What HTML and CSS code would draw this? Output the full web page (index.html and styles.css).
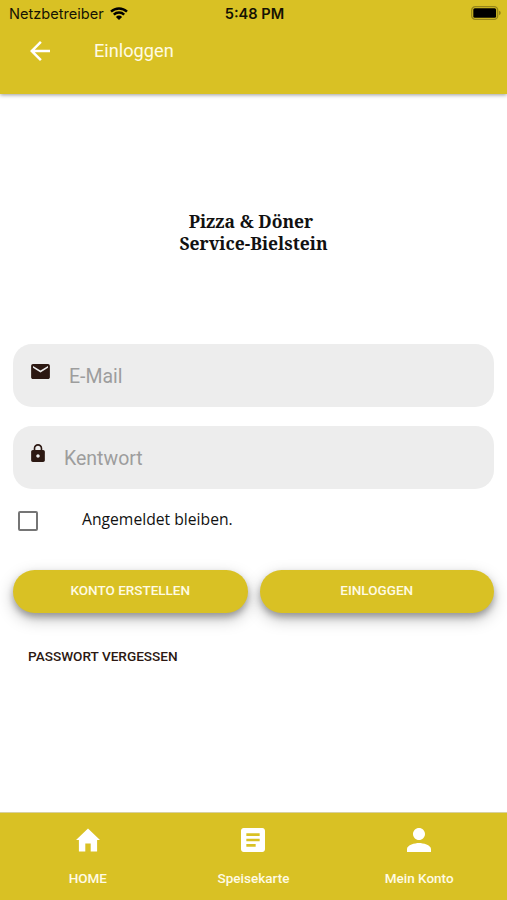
FILE: index.html
```html
<!DOCTYPE html>
<html lang="de">
<head>
<meta charset="UTF-8">
<title>Einloggen</title>
<link rel="stylesheet" href="styles.css">
</head>
<body>

<header class="header">
    <div class="status">
        <div class="carrier">
            <span class="carrier-name">Netzbetreiber</span>
            <svg class="wifi" viewBox="0 0 18 13">
                <path d="M1 4.7a11.5 11.5 0 0 1 16 0M3.8 7.6a7.4 7.4 0 0 1 10.4 0" fill="none" stroke="#000" stroke-width="2.4"/>
                <path d="M5.9 9.9a4.4 4.4 0 0 1 6.2 0L9 13z"/>
            </svg>
        </div>
        <span class="time">5:48 PM</span>
        <svg class="battery" viewBox="0 0 30 14">
            <rect x=".7" y=".7" width="26" height="12.6" rx="3.6" fill="none" stroke="#968619" stroke-width="1.3"/>
            <rect x="2.3" y="2.3" width="22.8" height="9.4" rx="1.5"/>
            <path d="M28 4.8v4.4q1.8-.6 1.8-2.2T28 4.8z" fill="#968619"/>
        </svg>
    </div>
    <div class="toolbar">
        <svg class="back" viewBox="4 4 16 16"><path d="M20 11H7.83l5.59-5.59L12 4l-8 8 8 8 1.41-1.41L7.83 13H20v-2z"/></svg>
        <h1 class="title">Einloggen</h1>
    </div>
</header>

<main class="content">
    <div class="logo">
        <div class="logo-first">Pizza &amp; Döner</div>
        <div class="logo-second">Service-Bielstein</div>
    </div>

    <form class="login">
        <label class="field">
            <svg class="icon-mail" viewBox="2 4 20 16"><path d="M20 4H4c-1.1 0-2 .9-2 2v12c0 1.1.9 2 2 2h16c1.1 0 2-.9 2-2V6c0-1.1-.9-2-2-2zm0 4l-8 5-8-5V6l8 5 8-5v2z"/></svg>
            <input class="input" type="email" placeholder="E-Mail">
        </label>
        <label class="field">
            <svg class="icon-lock" viewBox="4 1 16 21"><path d="M18 8h-1V6c0-2.76-2.24-5-5-5S7 3.24 7 6v2H6c-1.1 0-2 .9-2 2v10c0 1.1.9 2 2 2h12c1.1 0 2-.9 2-2V10c0-1.1-.9-2-2-2zm-6 9c-1.1 0-2-.9-2-2s.9-2 2-2 2 .9 2 2-.9 2-2 2zm3.1-9H8.9V6c0-1.71 1.39-3.1 3.1-3.1s3.1 1.39 3.1 3.1v2z"/></svg>
            <input class="input password" type="password" placeholder="Kentwort">
        </label>
        <label class="remember">
            <input class="checkbox" type="checkbox">
            <span class="remember-text">Angemeldet bleiben.</span>
        </label>
        <div class="buttons">
            <button class="button" type="button">KONTO ERSTELLEN</button>
            <button class="button" type="button">EINLOGGEN</button>
        </div>
        <a class="forgot">PASSWORT VERGESSEN</a>
    </form>
</main>

<nav class="tabs">
    <a class="tab">
        <svg class="tab-icon" viewBox="0 0 24 24"><path d="M9.3 23.5v-8h5.4v8h6.4V12H24L12 .5 0 12h2.9v11.5z"/></svg>
        <span>HOME</span>
    </a>
    <a class="tab">
        <svg class="tab-icon" viewBox="3 3 18 18"><path d="M19 3H5c-1.1 0-2 .9-2 2v14c0 1.1.9 2 2 2h14c1.1 0 2-.9 2-2V5c0-1.1-.9-2-2-2zm-5 14H7v-2h7v2zm3-4H7v-2h10v2zm0-4H7V7h10v2z"/></svg>
        <span>Speisekarte</span>
    </a>
    <a class="tab">
        <svg class="tab-icon" viewBox="4 4 16 16"><path d="M12 12c2.21 0 4-1.79 4-4s-1.79-4-4-4-4 1.79-4 4 1.79 4 4 4zm0 2c-2.67 0-8 1.34-8 4v2h16v-2c0-2.66-5.33-4-8-4z"/></svg>
        <span>Mein Konto</span>
    </a>
</nav>

</body>
</html>
```

FILE: styles.css
```css
* {
    box-sizing: border-box;
}
body {
    margin: 0;
    height: 900px;
    display: flex;
    flex-direction: column;
    background: #fff;
    font-family: Roboto, sans-serif;
    overflow: hidden;
}
svg {
    display: block;
    flex: none;
}
.header {
    height: 94px;
    background: #d9c124;
    box-shadow: 0 1px 4px rgba(0, 0, 0, 0.4);
}
.status {
    height: 27px;
    padding: 0 6px 0 9px;
    display: grid;
    grid-template-columns: 1fr auto 1fr;
    align-items: center;
    font-family: Inter, sans-serif;
    font-size: 14.6px;
    color: #151303;
}
.carrier {
    display: flex;
    align-items: center;
    gap: 6px;
}
.wifi {
    width: 18px;
    height: 13px;
    margin-bottom: 1px;
}
.time {
    margin-right: 1px;
    font-weight: 600;
}
.battery {
    width: 30px;
    height: 14px;
    margin-bottom: 1px;
    justify-self: end;
}
.toolbar {
    height: 48px;
    padding-left: 30px;
    display: flex;
    align-items: center;
    gap: 44px;
}
.back {
    width: 20px;
    height: 20px;
    fill: #fff;
}
.title {
    margin: 0 0 2px;
    font-size: 18.2px;
    font-weight: 400;
    color: #fffbe4;
}
.content {
    flex: 1;
    padding: 116px 13px 0;
}
.logo {
    height: 134px;
    font-family: "Noto Serif", "DejaVu Serif", serif;
    font-size: 17.5px;
    line-height: 22px;
    font-weight: bold;
    text-align: center;
    color: #111;
}
.logo-first {
    padding-right: 5px;
}
.field {
    height: 63px;
    margin-bottom: 19px;
    padding-left: 18px;
    display: flex;
    align-items: center;
    border-radius: 19px;
    background: #ededed;
}
.icon-mail {
    width: 19px;
    height: 15px;
    margin: 0 19px 8px 0;
    fill: #2c1812;
}
.icon-lock {
    width: 14px;
    height: 18px;
    margin: 0 19px 9px 0;
    fill: #2c1812;
}
.input {
    flex: 1;
    min-width: 0;
    padding: 2px 0 0;
    border: none;
    outline: none;
    background: none;
    font-family: Roboto, sans-serif;
    font-size: 19.5px;
}
.input::placeholder {
    color: #9d9d9d;
}
.remember {
    height: 25px;
    padding-left: 5px;
    display: flex;
    align-items: center;
}
.checkbox {
    appearance: none;
    width: 20px;
    height: 20px;
    margin: 0 44px 0 0;
    border: 2px solid #757575;
    border-radius: 2px;
}
.remember-text {
    padding-bottom: 3px;
    font-family: "Open Sans", sans-serif;
    font-size: 15.7px;
    color: #111;
}
.buttons {
    margin-top: 37px;
    display: grid;
    grid-template-columns: 1fr 1fr;
    gap: 12px;
}
.button {
    height: 43px;
    padding: 0 0 3px;
    border: none;
    border-radius: 22px;
    background: #d9c124;
    box-shadow: 0 4px 6px rgba(0, 0, 0, 0.25), 0 6px 16px rgba(0, 0, 0, 0.25);
    color: #fffbe4;
    font-family: Roboto, sans-serif;
    font-size: 13.5px;
    font-weight: 500;
}
.forgot {
    display: block;
    margin: 34px 0 0 15px;
    font-size: 13.6px;
    font-weight: 500;
    line-height: 18px;
    color: #2c1812;
}
.tabs {
    height: 88px;
    padding: 0 5px;
    display: grid;
    grid-template-columns: repeat(3, 1fr);
    border-top: 1px solid #d8d0a0;
    background: #d9c124;
}
.tab {
    padding-top: 15px;
    display: flex;
    flex-direction: column;
    align-items: center;
    gap: 18px;
    color: #fffbe4;
    font-size: 13.5px;
    font-weight: 500;
    line-height: 16px;
}
.tab-icon {
    width: 24px;
    height: 24px;
    fill: #fff;
}
```
